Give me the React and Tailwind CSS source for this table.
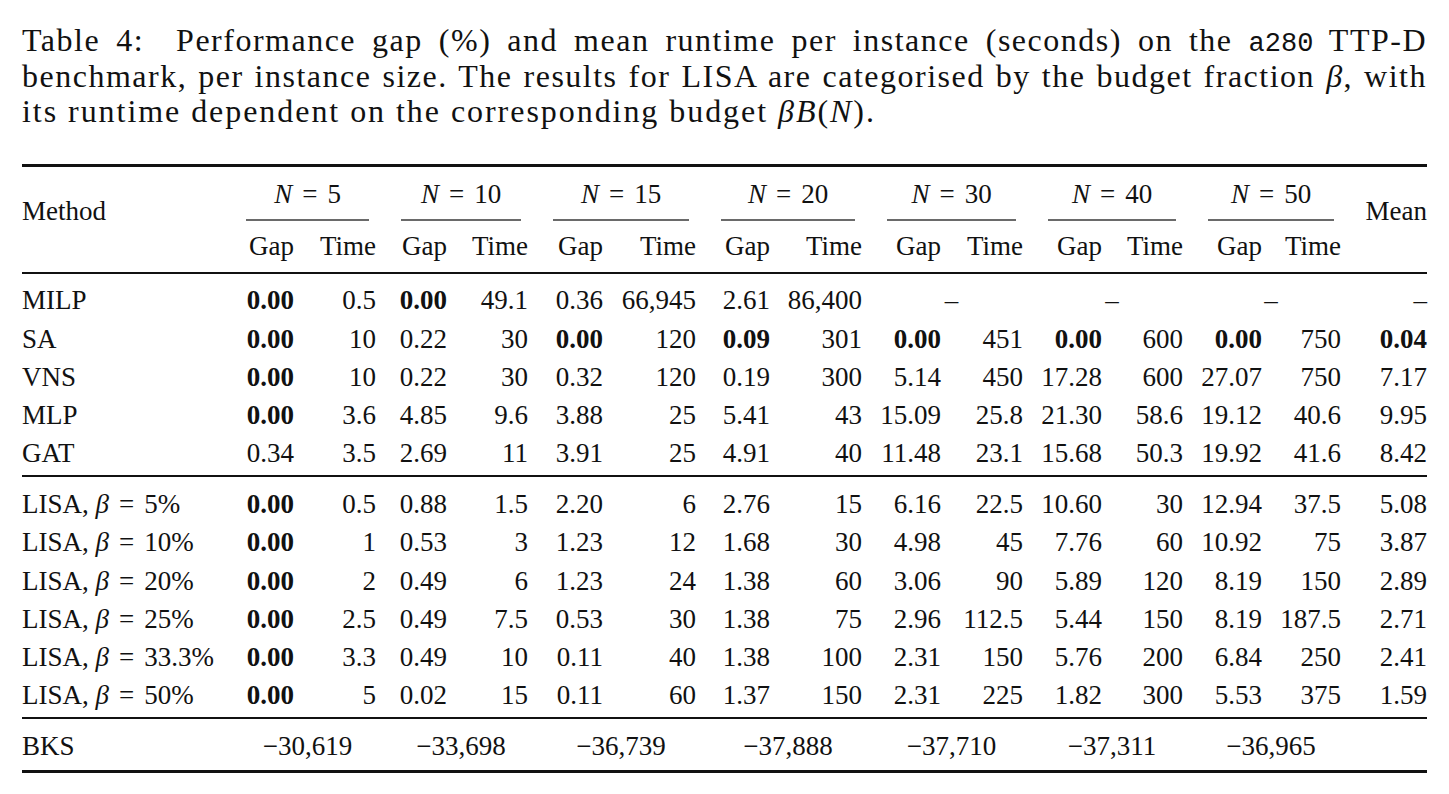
import React from "react";

const GRID =
  "grid grid-cols-[211px_73px_82px_71px_81px_75px_93px_74px_92px_79px_82px_79px_81px_79px_79px_74px]";

const B = (t) => ({ b: true, t });
const DASH = { dash: true };

const top = [
  ["MILP", [B("0.00"), "0.5", B("0.00"), "49.1", "0.36", "66,945", "2.61", "86,400", DASH, DASH, DASH], "–"],
  ["SA", [B("0.00"), "10", "0.22", "30", B("0.00"), "120", B("0.09"), "301", B("0.00"), "451", B("0.00"), "600", B("0.00"), "750"], B("0.04")],
  ["VNS", [B("0.00"), "10", "0.22", "30", "0.32", "120", "0.19", "300", "5.14", "450", "17.28", "600", "27.07", "750"], "7.17"],
  ["MLP", [B("0.00"), "3.6", "4.85", "9.6", "3.88", "25", "5.41", "43", "15.09", "25.8", "21.30", "58.6", "19.12", "40.6"], "9.95"],
  ["GAT", ["0.34", "3.5", "2.69", "11", "3.91", "25", "4.91", "40", "11.48", "23.1", "15.68", "50.3", "19.92", "41.6"], "8.42"],
];

const lisa = [
  ["5%", [B("0.00"), "0.5", "0.88", "1.5", "2.20", "6", "2.76", "15", "6.16", "22.5", "10.60", "30", "12.94", "37.5"], "5.08"],
  ["10%", [B("0.00"), "1", "0.53", "3", "1.23", "12", "1.68", "30", "4.98", "45", "7.76", "60", "10.92", "75"], "3.87"],
  ["20%", [B("0.00"), "2", "0.49", "6", "1.23", "24", "1.38", "60", "3.06", "90", "5.89", "120", "8.19", "150"], "2.89"],
  ["25%", [B("0.00"), "2.5", "0.49", "7.5", "0.53", "30", "1.38", "75", "2.96", "112.5", "5.44", "150", "8.19", "187.5"], "2.71"],
  ["33.3%", [B("0.00"), "3.3", "0.49", "10", "0.11", "40", "1.38", "100", "2.31", "150", "5.76", "200", "6.84", "250"], "2.41"],
  ["50%", [B("0.00"), "5", "0.02", "15", "0.11", "60", "1.37", "150", "2.31", "225", "1.82", "300", "5.53", "375"], "1.59"],
];

const sizes = ["5", "10", "15", "20", "30", "40", "50"];
const bks = ["−30,619", "−33,698", "−36,739", "−37,888", "−37,710", "−37,311", "−36,965"];

function Eq({ lhs, rhs }) {
  return (
    <span className="whitespace-nowrap">
      <i>{lhs}</i>
      <span className="mx-[10px]">=</span>
      {rhs}
    </span>
  );
}

function Val({ v }) {
  if (v && v.dash) {
    return (
      <div className="col-span-2 h-[38.3px] leading-[38.3px]">
        <div className="ml-[13px] mr-[19px] text-center">–</div>
      </div>
    );
  }
  const bold = v && v.b;
  const t = bold ? v.t : v;
  return (
    <div className={"h-[38.3px] pr-3 text-right leading-[38.3px] " + (bold ? "font-bold" : "")}>{t}</div>
  );
}

function MeanVal({ v }) {
  const bold = v && v.b;
  const t = bold ? v.t : v;
  return (
    <div className={"h-[38.3px] text-right leading-[38.3px] " + (bold ? "font-bold" : "")}>{t}</div>
  );
}

function Row({ label, vals, mean }) {
  return (
    <div className={GRID}>
      <div className="h-[38.3px] whitespace-nowrap leading-[38.3px]">{label}</div>
      {vals.map((v, i) => (
        <Val key={i} v={v} />
      ))}
      <MeanVal v={mean} />
    </div>
  );
}

export default function App() {
  return (
    <div className="min-h-[794px] w-[1449px] bg-white px-[22px] font-['Liberation_Serif',serif] text-[27px] text-[#111]">
      {/* caption */}
      <div className="pt-[23.45px] text-[32px] leading-[35.5px] tracking-[1.5px]">
        <div className="h-[35.5px] text-justify [text-align-last:justify]">
          Table 4:&nbsp; Performance gap (%) and mean runtime per instance (seconds) on the{" "}
          <span className="font-['Liberation_Mono',monospace] text-[27px] leading-[10px] tracking-normal">a280</span> TTP-D
        </div>
        <div className="h-[35.5px] text-justify [text-align-last:justify]">
          benchmark, per instance size. The results for LISA are categorised by the budget fraction <i>β</i>, with
        </div>
        <div className="h-[35.5px] tracking-[1.95px]">
          its runtime dependent on the corresponding budget <i>βB</i>(<i>N</i>).
        </div>
      </div>

      {/* table */}
      <div className="mt-[34.55px]">
        <div className="h-[3px] bg-[#111]" />
        <div className="pt-[7.25px] pb-[6.95px]">
          <div className={GRID + " grid-rows-[38.3px_13.7px_38.3px]"}>
            <div className="row-span-3 pt-[17px] leading-[38.3px]">Method</div>
            {sizes.map((n) => (
              <div key={n} className="col-span-2 leading-[38.3px]">
                <div className="ml-[13px] mr-[19px] text-center">
                  <Eq lhs="N" rhs={n} />
                </div>
              </div>
            ))}
            <div className="row-span-3 pt-[17px] text-right leading-[38.3px]">Mean</div>
            {sizes.map((n) => (
              <div key={"r" + n} className="col-span-2 pt-[6px]">
                <div className="ml-[13px] mr-[19px] h-[2px] bg-[#6a6a6a]" />
              </div>
            ))}
            {sizes.map((n) => (
              <React.Fragment key={"h" + n}>
                <div className="pr-3 text-right leading-[38.3px]">Gap</div>
                <div className="pr-3 text-right leading-[38.3px]">Time</div>
              </React.Fragment>
            ))}
          </div>
        </div>
        <div className="h-[2px] bg-[#111]" />

        <div className="pt-[7.25px] pb-[2.25px]">
          {top.map(([label, vals, mean]) => (
            <Row key={label} label={label} vals={vals} mean={mean} />
          ))}
        </div>
        <div className="h-[2px] bg-[#111]" />

        <div className="pt-[8.05px] pb-[2.45px]">
          {lisa.map(([pct, vals, mean]) => (
            <Row
              key={pct}
              label={
                <span>
                  LISA, <Eq lhs="β" rhs={pct} />
                </span>
              }
              vals={vals}
              mean={mean}
            />
          ))}
        </div>
        <div className="h-[2px] bg-[#111]" />

        <div className="pt-[7.45px] pb-[4.95px]">
          <div className={GRID}>
            <div className="h-[38.3px] leading-[38.3px]">BKS</div>
            {bks.map((b) => (
              <div key={b} className="col-span-2 h-[38.3px] leading-[38.3px]">
                <div className="ml-[13px] mr-[19px] text-center">{b}</div>
              </div>
            ))}
            <div />
          </div>
        </div>
        <div className="h-[3px] bg-[#111]" />
      </div>
    </div>
  );
}
